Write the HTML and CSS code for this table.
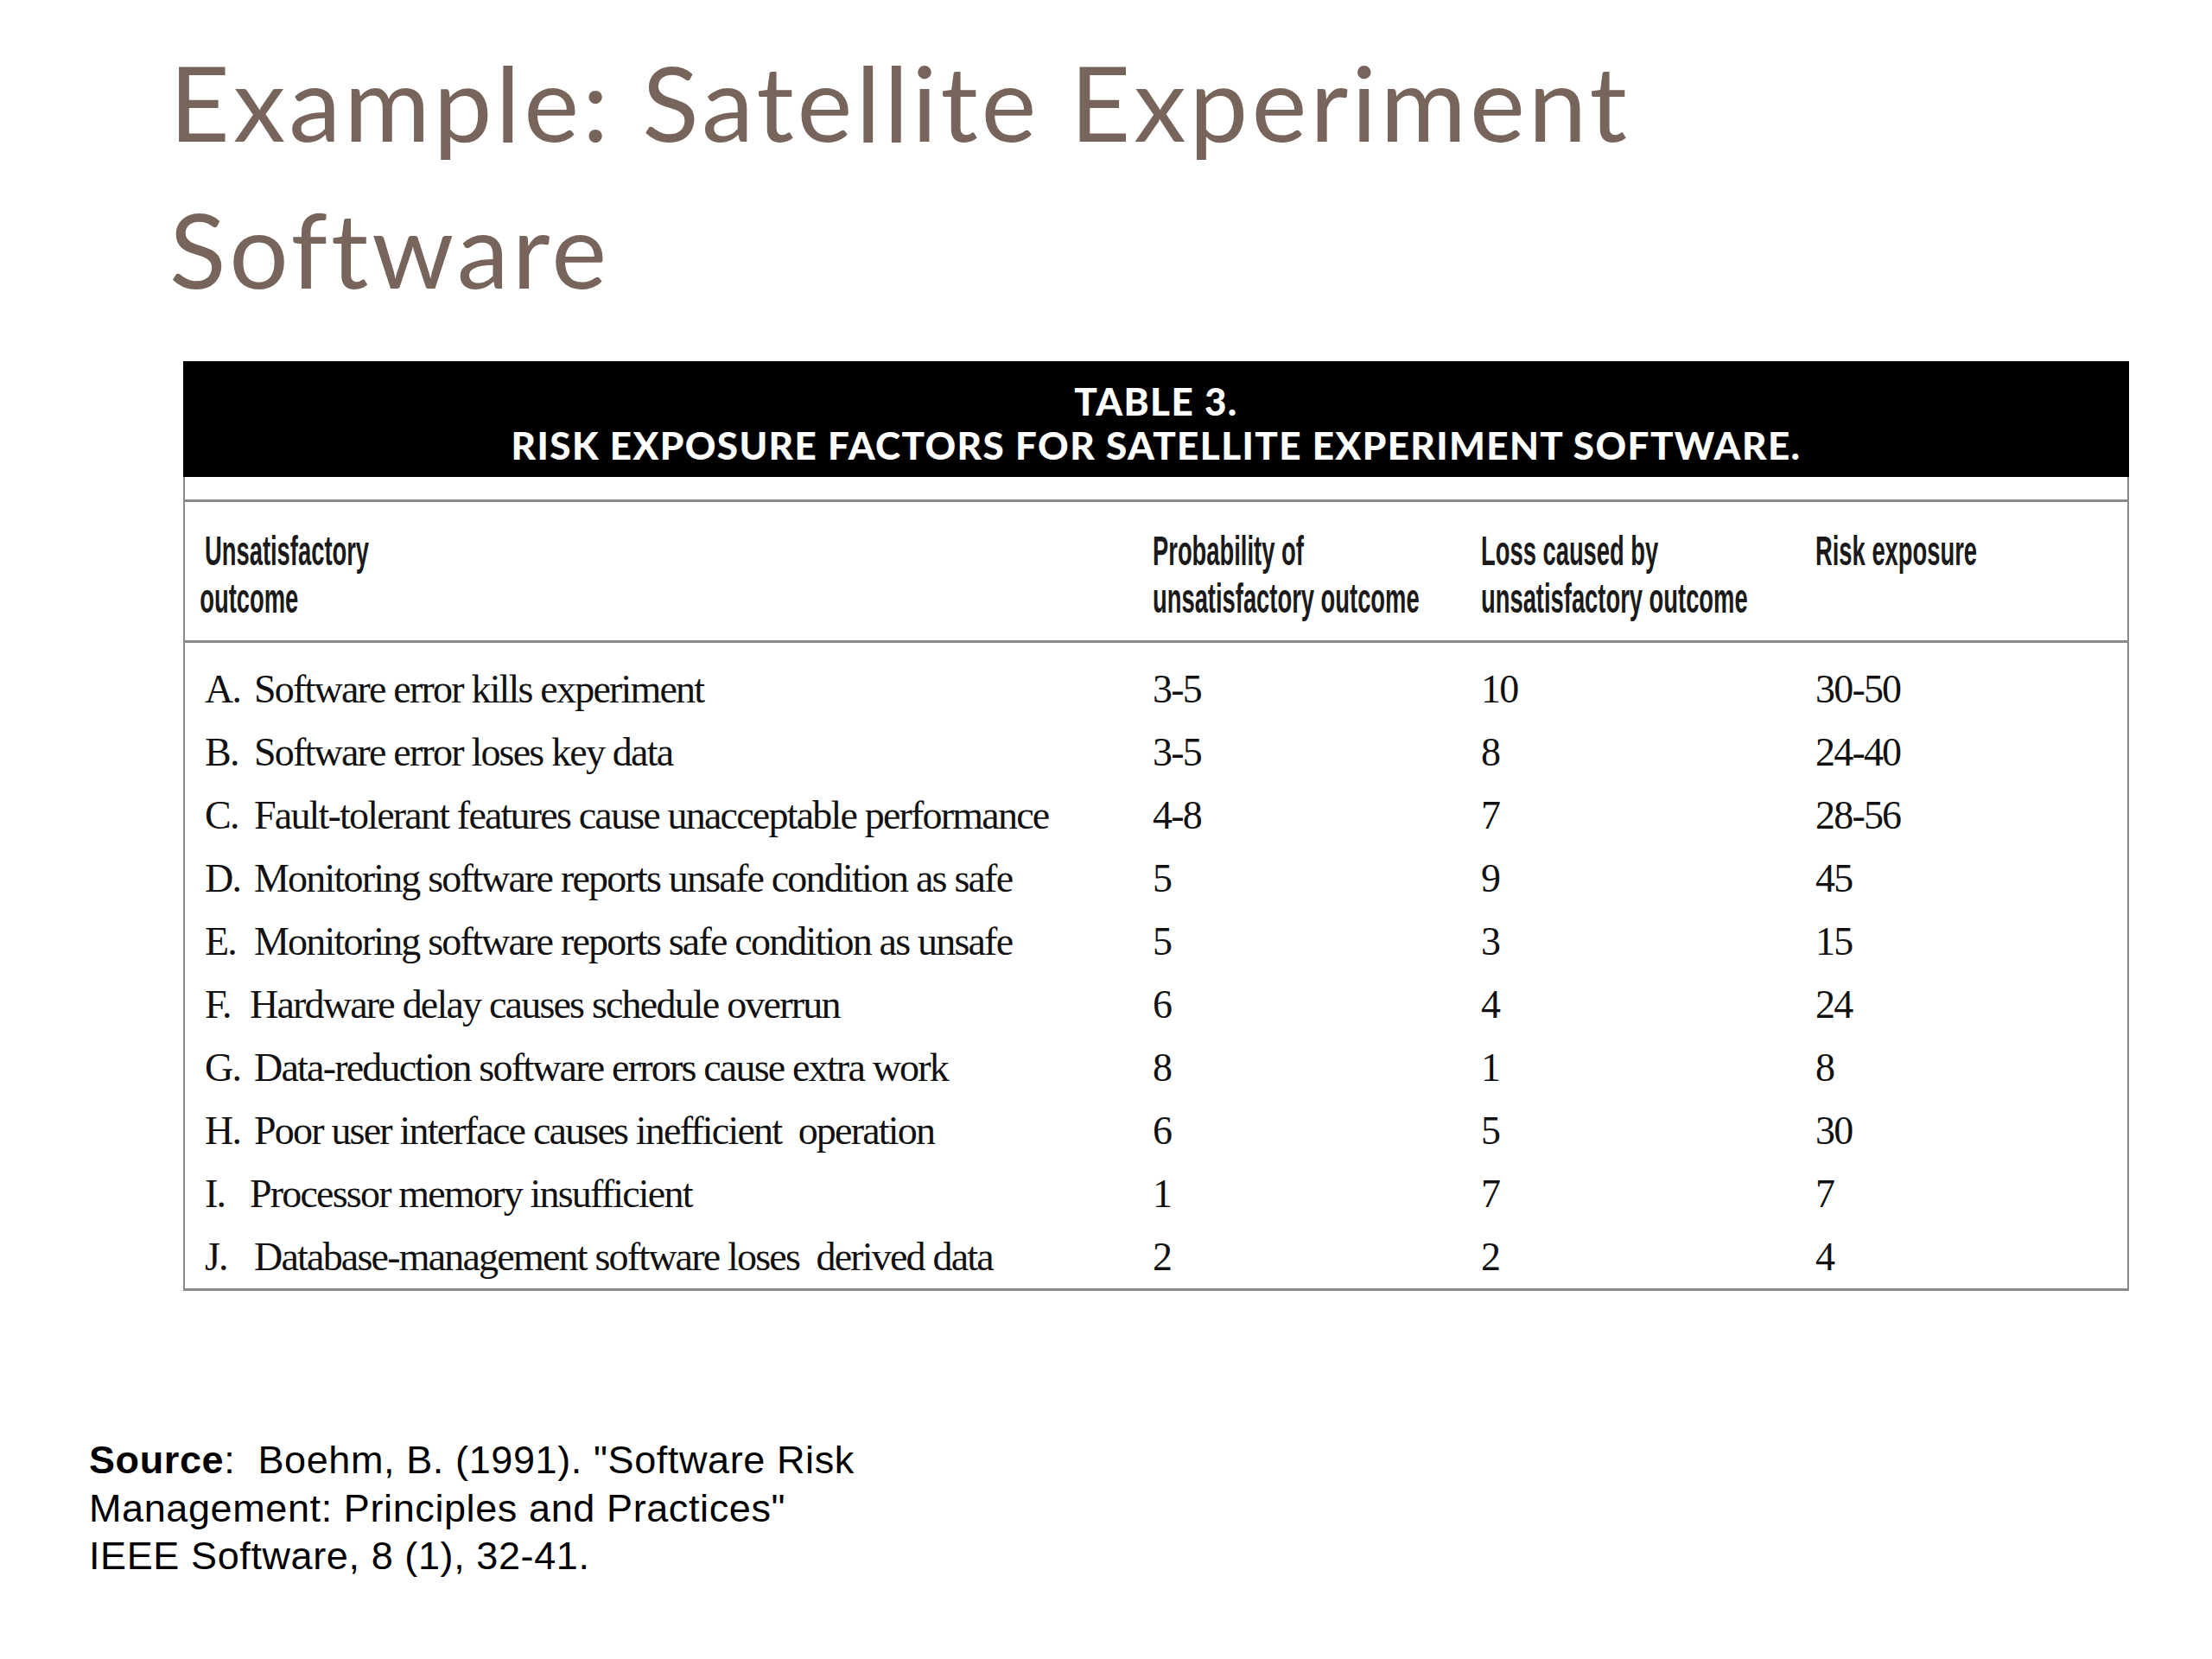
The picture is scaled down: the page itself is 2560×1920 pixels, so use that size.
FILE: index.html
```html
<!DOCTYPE html>
<html lang="en">
<head>
<meta charset="utf-8">
<title>Example: Satellite Experiment Software</title>
<link rel="stylesheet" href="styles.css">
</head>
<body>
<main class="slide">
  <h1 class="title">Example: Satellite Experiment<br>Software</h1>

  <section class="risk-table">
    <div class="caption">
      <div class="caption-line">TABLE 3.</div>
      <div class="caption-line">RISK EXPOSURE FACTORS FOR SATELLITE EXPERIMENT SOFTWARE.</div>
    </div>
    <div class="frame">
      <div class="head-row">
        <div class="hcell"><span class="hin">Unsatisfactory<br><span class="out">outcome</span></span></div>
        <div class="hcell"><span class="hin">Probability of<br>unsatisfactory outcome</span></div>
        <div class="hcell"><span class="hin">Loss caused by<br>unsatisfactory outcome</span></div>
        <div class="hcell"><span class="hin">Risk exposure</span></div>
      </div>
      <div class="body">
        <div class="row"><div class="cell"><span class="lbl">A.</span>Software error kills experiment</div><div class="cell">3-5</div><div class="cell">10</div><div class="cell">30-50</div></div>
        <div class="row"><div class="cell"><span class="lbl">B.</span>Software error loses key data</div><div class="cell">3-5</div><div class="cell">8</div><div class="cell">24-40</div></div>
        <div class="row"><div class="cell"><span class="lbl">C.</span>Fault-tolerant features cause unacceptable performance</div><div class="cell">4-8</div><div class="cell">7</div><div class="cell">28-56</div></div>
        <div class="row"><div class="cell"><span class="lbl">D.</span>Monitoring software reports unsafe condition as safe</div><div class="cell">5</div><div class="cell">9</div><div class="cell">45</div></div>
        <div class="row"><div class="cell"><span class="lbl">E.</span>Monitoring software reports safe condition as unsafe</div><div class="cell">5</div><div class="cell">3</div><div class="cell">15</div></div>
        <div class="row"><div class="cell"><span class="lbl lbl-f">F.</span>Hardware delay causes schedule overrun</div><div class="cell">6</div><div class="cell">4</div><div class="cell">24</div></div>
        <div class="row"><div class="cell"><span class="lbl">G.</span>Data-reduction software errors cause extra work</div><div class="cell">8</div><div class="cell">1</div><div class="cell">8</div></div>
        <div class="row"><div class="cell"><span class="lbl">H.</span>Poor user interface causes inefficient&nbsp; operation</div><div class="cell">6</div><div class="cell">5</div><div class="cell">30</div></div>
        <div class="row"><div class="cell"><span class="lbl lbl-i">I.</span>Processor memory insufficient</div><div class="cell">1</div><div class="cell">7</div><div class="cell">7</div></div>
        <div class="row"><div class="cell"><span class="lbl">J.</span>Database-management software loses&nbsp; derived data</div><div class="cell">2</div><div class="cell">2</div><div class="cell">4</div></div>
      </div>
    </div>
  </section>

  <p class="source"><strong>Source</strong>:&nbsp; Boehm, B. (1991). "Software Risk<br>Management: Principles and Practices"<br>IEEE Software, 8 (1), 32-41.</p>
</main>
</body>
</html>
```

FILE: styles.css
```css
html, body {
  margin: 0;
  padding: 0;
  background: #ffffff;
}

.slide {
  width: 2560px;
  height: 1920px;
  box-sizing: border-box;
  padding-top: 33px;
}

.title {
  margin: 0;
  padding-left: 196px;
  font-family: Lato, "Open Sans", sans-serif;
  font-weight: 400;
  font-size: 121px;
  line-height: 170px;
  color: #77655b;
  letter-spacing: 4px;
}

.risk-table {
  margin: 45px 0 0 212px;
  width: 2252px;
}

.caption {
  background: #000000;
  color: #ffffff;
  height: 134px;
  box-sizing: border-box;
  padding-top: 21px;
  text-align: center;
  font-family: Lato, "DejaVu Sans", sans-serif;
  font-weight: 900;
  font-size: 44px;
  line-height: 51px;
  letter-spacing: 1.4px;
}

.frame {
  border-left: 2px solid #8a8a8a;
  border-right: 2px solid #8a8a8a;
  border-bottom: 3px solid #8a8a8a;
  padding-top: 26px;
}

.head-row {
  display: grid;
  grid-template-columns: 1097px 380px 387px 1fr;
  padding: 29px 0 21px 23px;
  border-top: 3px solid #8a8a8a;
  border-bottom: 3px solid #8a8a8a;
  font-family: "Liberation Sans", Arial, sans-serif;
  font-weight: 700;
  font-size: 48px;
  line-height: 55px;
  color: #1a1a1a;
}

.hin {
  display: block;
  white-space: nowrap;
  transform: scaleX(0.57);
  transform-origin: left center;
}

.hcell .out {
  margin-left: -10px;
}

.body {
  padding: 17px 0 0 23px;
}

.row {
  display: grid;
  grid-template-columns: 1097px 380px 387px 1fr;
  height: 73px;
  align-items: center;
  font-family: "Liberation Serif", "DejaVu Serif", serif;
  font-size: 46px;
  color: #111111;
  letter-spacing: -1.8px;
}

.lbl {
  display: inline-block;
  width: 57px;
}

.lbl-f,
.lbl-i {
  width: 52px;
}

.source {
  margin: 168px 0 0 103px;
  font-family: "Liberation Sans", Arial, sans-serif;
  font-size: 45px;
  line-height: 55.5px;
  letter-spacing: 0.6px;
  color: #000000;
}
```
